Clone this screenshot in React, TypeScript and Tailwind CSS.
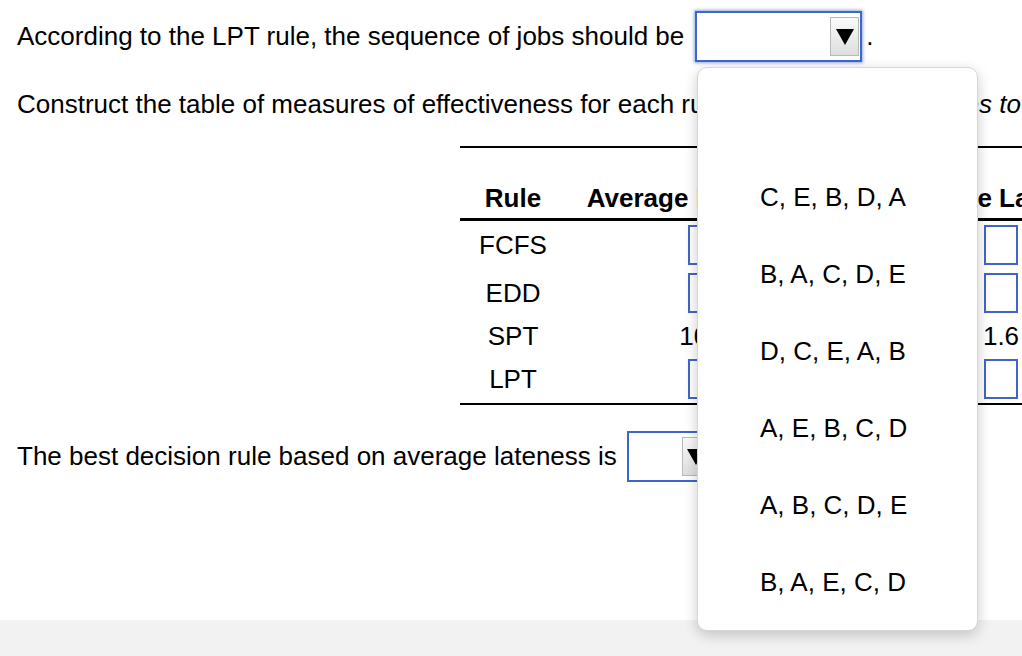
import React from 'react';

const OPTIONS = ['C, E, B, D, A', 'B, A, C, D, E', 'D, C, E, A, B', 'A, E, B, C, D', 'A, B, C, D, E', 'B, A, E, C, D'];

const ROWS = [
  { rule: 'FCFS', flow: null, late: null },
  { rule: 'EDD', flow: null, late: null },
  { rule: 'SPT', flow: '10.4', late: '1.6' },
  { rule: 'LPT', flow: null, late: null },
];

function Arrow() {
  return (
    <div className="flex h-[39px] w-[29px] items-center justify-center border border-[#b9b9b9] bg-gradient-to-b from-[#fafafa] to-[#dedede]">
      <svg width="18" height="16" viewBox="0 0 18 16">
        <polygon points="0,0 18,0 9,16" fill="#000" />
      </svg>
    </div>
  );
}

function Select({ width, focused }: { width: string; focused?: boolean }) {
  return (
    <div
      className={
        'flex h-[51px] items-center justify-end border-2 border-[#3d66c9] bg-white pr-[1px] ' +
        width +
        (focused ? ' shadow-[0_0_3px_1px_rgba(61,102,201,0.55)]' : '')
      }
    >
      <Arrow />
    </div>
  );
}

function Box() {
  return <div className="mx-auto h-[40px] w-[34px] border-2 border-[#3f66c6] bg-white" />;
}

export default function App() {
  return (
    <div className="relative h-[656px] w-[1022px] overflow-hidden bg-white font-['Liberation_Sans',Arial,sans-serif] text-[26px] text-black">
      <div className="pl-[17px] pt-[11px]">
        <div className="flex h-[51px] items-center whitespace-nowrap">
          <span>According to the LPT rule, the sequence of jobs should be</span>
          <div className="ml-[11px]">
            <Select width="w-[167px]" focused />
          </div>
          <span className="ml-[4px]">.</span>
        </div>

        <p className="mt-[27px] whitespace-nowrap leading-[30px]">
          Construct the table of measures of effectiveness for each rule <i>(round your responses to two decimal places).</i>
        </p>

        <table className="ml-[443px] mt-[27px] w-[707px] min-w-[707px] table-fixed border-collapse whitespace-nowrap">
          <colgroup>
            <col className="w-[106px]" />
            <col className="w-[277px]" />
            <col className="w-[324px]" />
          </colgroup>
          <thead>
            <tr className="border-t-2 border-b-[3px] border-black">
              <th className="h-[72px] pb-[5px] align-bottom font-bold leading-[30px]">Rule</th>
              <th className="h-[72px] pb-[5px] align-bottom font-bold leading-[30px]">Average Flow Time</th>
              <th className="h-[72px] pb-[5px] pr-[8px] align-bottom font-bold leading-[30px]">Average Lateness</th>
            </tr>
          </thead>
          <tbody className="border-b-2 border-black">
            {ROWS.map((r) => (
              <tr key={r.rule}>
                <td className="py-[4px] text-center leading-[30px]">{r.rule}</td>
                <td className="py-[4px] text-center leading-[30px]">{r.flow ?? <Box />}</td>
                <td className="py-[4px] pr-[8px] text-center leading-[30px]">{r.late ?? <Box />}</td>
              </tr>
            ))}
          </tbody>
        </table>

        <div className="mt-[27px] flex h-[50px] items-center whitespace-nowrap">
          <span>The best decision rule based on average lateness is</span>
          <div className="ml-[10px]">
            <Select width="w-[87px]" />
          </div>
        </div>
      </div>

      <div className="mt-[138px] h-[40px] bg-[#f2f2f2]" />

      {/* open option list of the first select */}
      <div className="absolute left-[697px] top-[67px] h-[564px] w-[281px] rounded-[10px] border border-[#d6d6d6] bg-white pt-[14px] shadow-[0_4px_14px_rgba(0,0,0,0.2)]">
        <div className="h-[77px]" />
        {OPTIONS.map((o) => (
          <div key={o} className="flex h-[77px] items-center whitespace-nowrap pl-[62px] text-[26px]">
            {o}
          </div>
        ))}
      </div>
    </div>
  );
}
